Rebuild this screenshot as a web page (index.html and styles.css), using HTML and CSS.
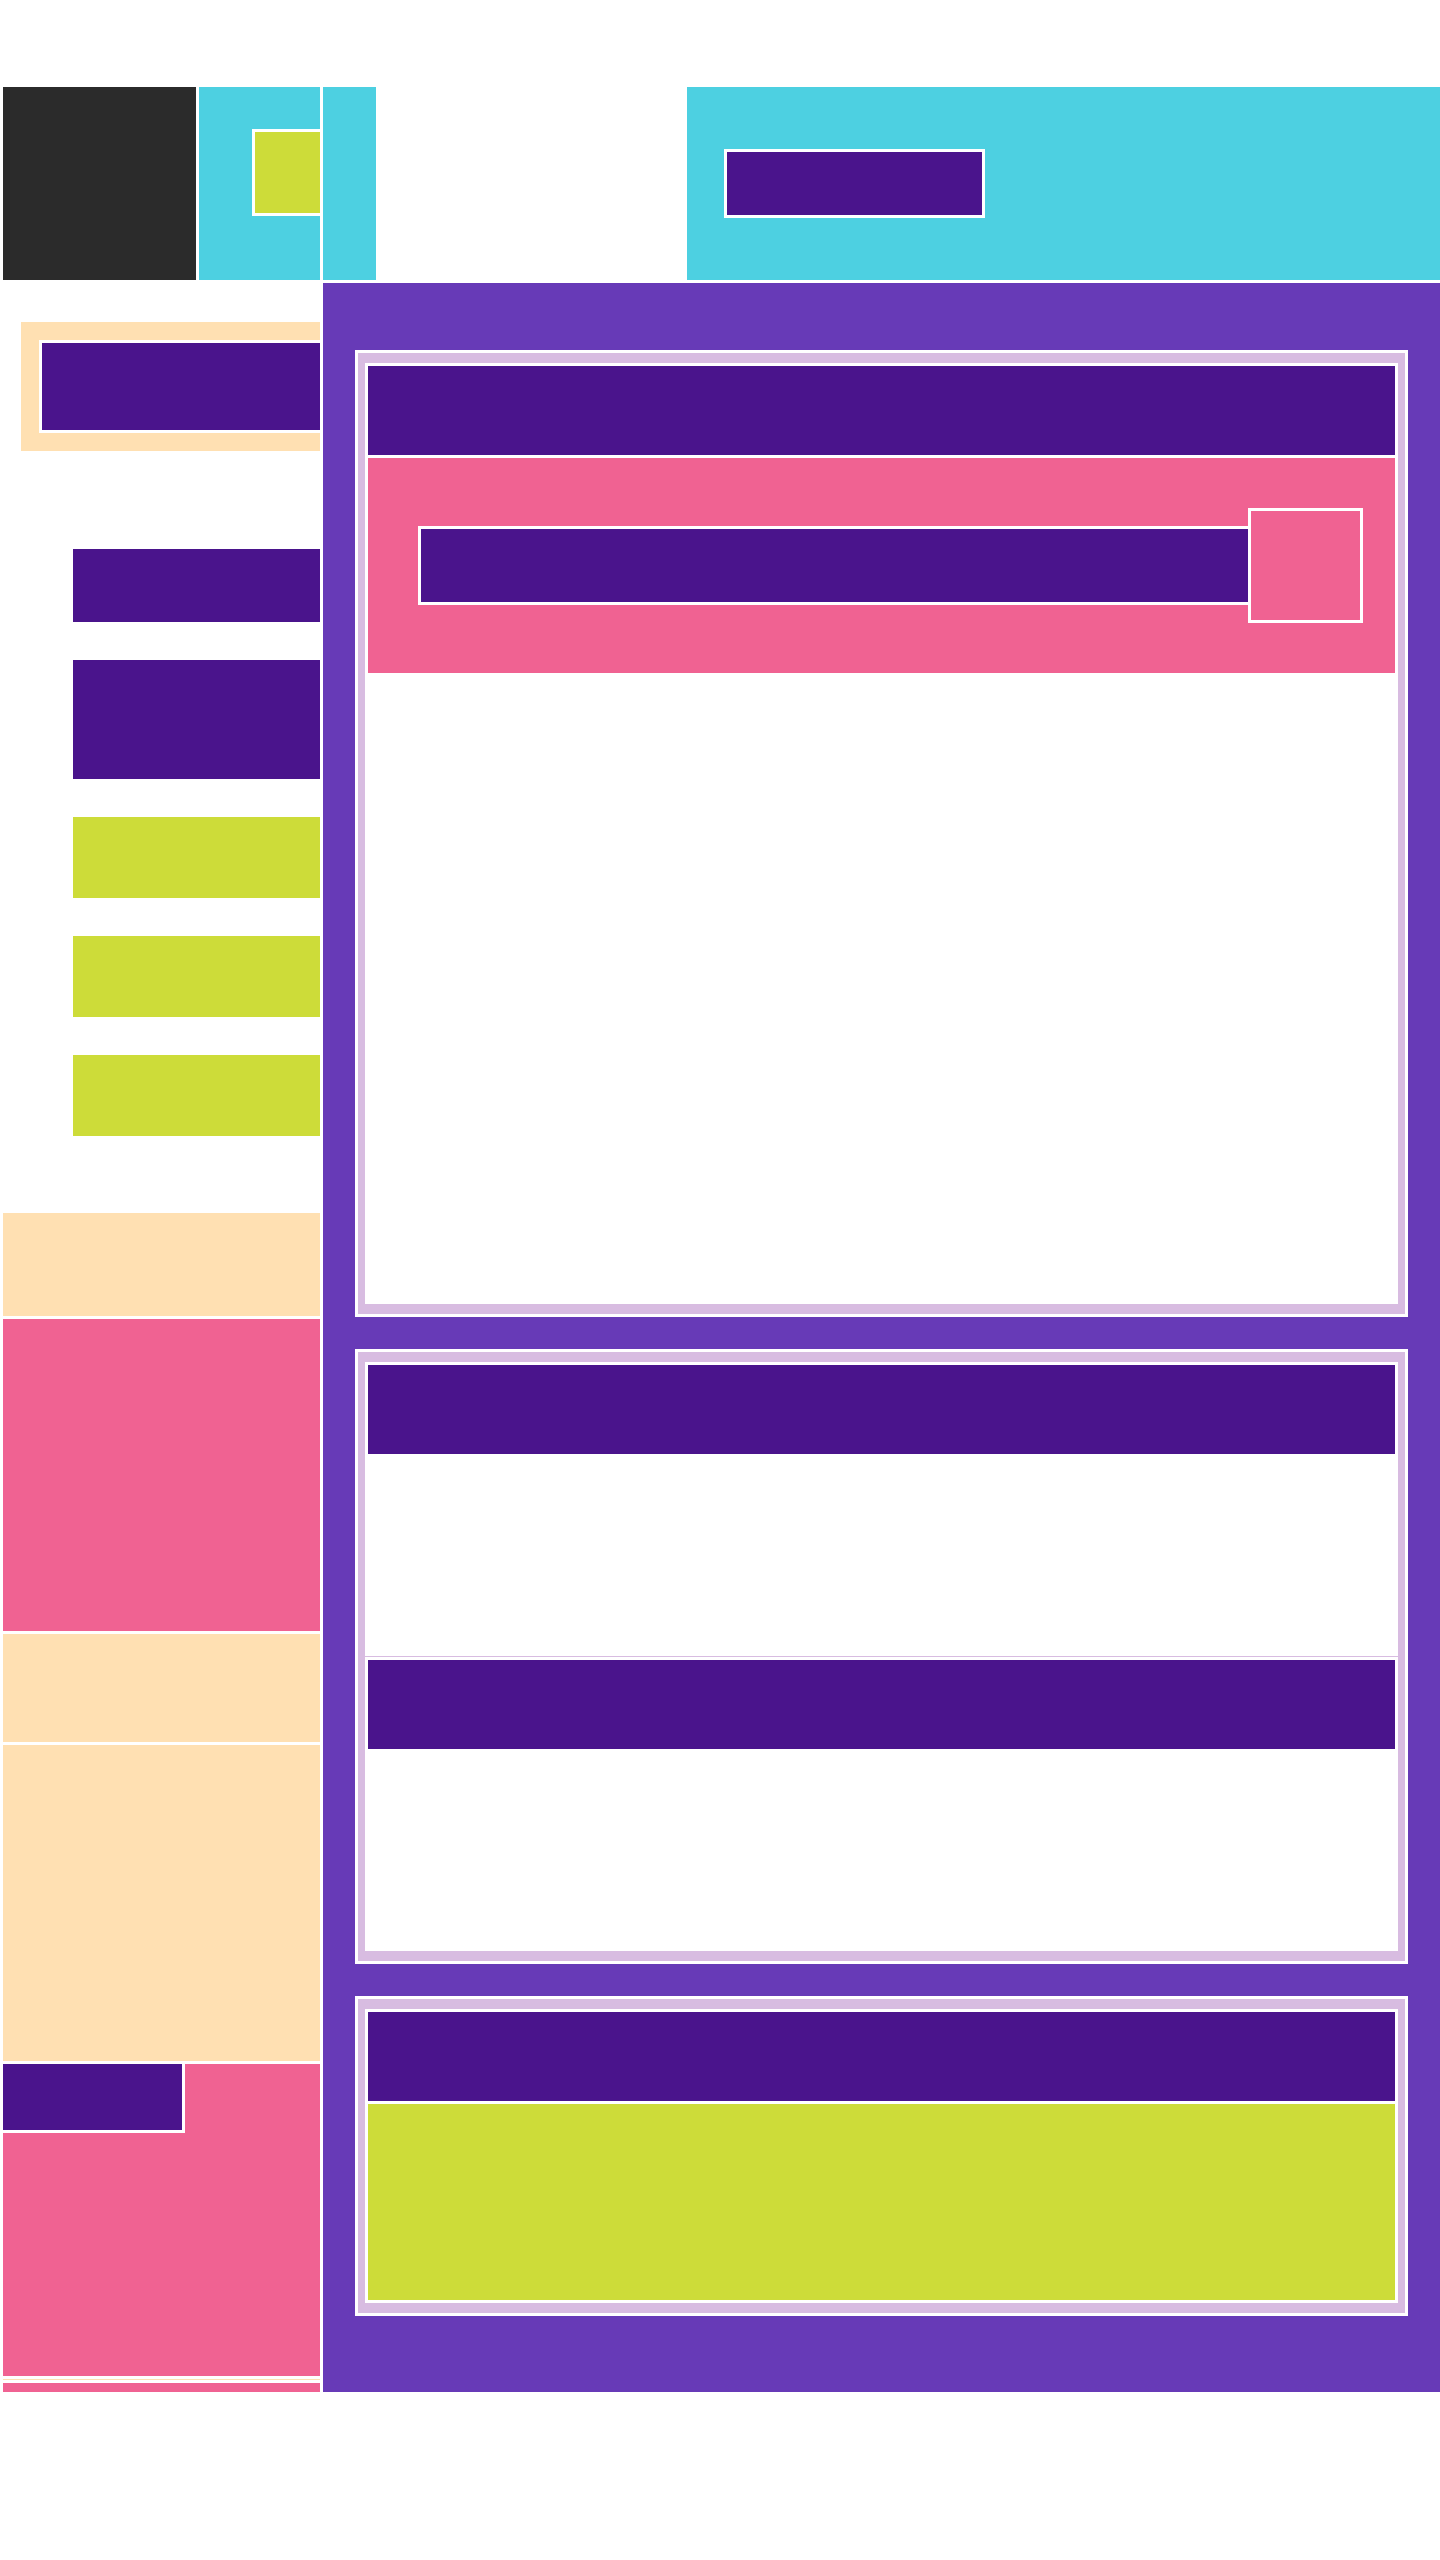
FILE: index.html
```html
<!DOCTYPE html>
<html lang="en">
<head>
    <meta charset="UTF-8">
    <meta name="viewport" content="width=device-width, initial-scale=1.0">
    <title>Dashboard</title>
    <link rel="stylesheet" href="styles.css">
</head>
<body>

    <div class="page">
        <header class="topbar">
            <div class="brand"></div>
            <div class="brand-tools">
                <span class="tool-chip"></span>
            </div>
            <div class="nav-toggle"></div>
            <div class="topbar-main">
                <span class="topbar-btn"></span>
            </div>
        </header>

        <div class="layout">
            <aside class="sidebar">
                <div class="profile">
                    <div class="profile-name"></div>
                </div>

                <nav class="menu">
                    <a class="menu-item menu-dark"></a>
                    <a class="menu-item menu-dark menu-tall"></a>
                    <a class="menu-item menu-lime"></a>
                    <a class="menu-item menu-lime"></a>
                    <a class="menu-item menu-lime"></a>
                </nav>

                <div class="side-blocks">
                    <div class="block peach block-notice"></div>
                    <div class="block pink block-feature"></div>
                    <div class="block peach block-info"></div>
                    <div class="block peach block-list"></div>
                    <div class="block pink block-feature">
                        <span class="side-btn"></span>
                    </div>
                    <div class="block peach block-rule"></div>
                    <div class="block pink block-foot"></div>
                </div>
            </aside>

            <main class="content">
                <section class="card">
                    <div class="panel">
                        <div class="panel-head"></div>
                        <div class="search-bar">
                            <div class="search-input"></div>
                            <div class="search-btn"></div>
                        </div>
                        <div class="panel-fill"></div>
                    </div>
                </section>

                <section class="card">
                    <div class="panel">
                        <div class="panel-head"></div>
                        <div class="panel-body"></div>
                    </div>
                    <div class="panel">
                        <div class="panel-head"></div>
                        <div class="panel-body"></div>
                    </div>
                </section>

                <section class="card">
                    <div class="panel">
                        <div class="panel-head"></div>
                        <div class="panel-body lime-body"></div>
                    </div>
                </section>
            </main>
        </div>
    </div>

</body>
</html>
```

FILE: styles.css
```css
body {
    font-family: "Liberation Sans", Arial, sans-serif;
    margin: 0;
    padding: 0;
    background-color: #fff;
}

.page {
    width: 1440px;
    padding: 87px 0 0 3px;
    box-sizing: border-box;
}

/* top bar */
.topbar {
    display: flex;
    gap: 3px;
    height: 193px;
}

.brand {
    width: 193px;
    background-color: #2b2b2b;
}

.brand-tools {
    width: 121px;
    background-color: #4dd0e1;
    overflow: hidden;
}

.tool-chip {
    display: block;
    width: 100px;
    height: 81px;
    margin: 42px 0 0 53px;
    border: 3px solid #fff;
    background-color: #cddc39;
}

.nav-toggle {
    width: 53px;
    background-color: #4dd0e1;
}

.topbar-main {
    width: 753px;
    margin-left: auto;
    display: flex;
    align-items: center;
    padding-left: 37px;
    box-sizing: border-box;
    background-color: #4dd0e1;
}

.topbar-btn {
    display: block;
    width: 255px;
    height: 63px;
    border: 3px solid #fff;
    background-color: #4a148c;
}

/* layout */
.layout {
    display: flex;
    gap: 3px;
    margin-top: 3px;
}

.sidebar {
    width: 317px;
    display: flex;
    flex-direction: column;
}

.profile {
    margin: 39px 0 0 18px;
    padding: 18px 0 18px 18px;
    background-color: #ffe0b2;
}

.profile-name {
    height: 87px;
    border: 3px solid #fff;
    border-right: none;
    background-color: #4a148c;
}

.menu {
    display: flex;
    flex-direction: column;
    gap: 38px;
    margin-top: 98px;
    padding-left: 70px;
}

.menu-item {
    display: block;
    height: 81px;
}

.menu-dark {
    height: 73px;
    background-color: #4a148c;
}

.menu-tall {
    height: 119px;
}

.menu-lime {
    background-color: #cddc39;
}

.side-blocks {
    display: flex;
    flex-direction: column;
    gap: 3px;
    margin-top: 77px;
}

.peach {
    background-color: #ffe0b2;
}

.pink {
    background-color: #f06292;
}

.block-notice {
    height: 103px;
}

.block-feature {
    height: 312px;
}

.block-info {
    height: 108px;
}

.block-list {
    height: 316px;
}

.block-rule {
    height: 1px;
}

.block-foot {
    height: 9px;
}

.side-btn {
    display: block;
    width: 179px;
    height: 66px;
    border-right: 3px solid #fff;
    border-bottom: 3px solid #fff;
    background-color: #4a148c;
}

/* main content */
.content {
    flex: 1;
    display: flex;
    flex-direction: column;
    gap: 32px;
    padding: 67px 32px 76px;
    background-color: #673ab7;
}

.card {
    display: flex;
    flex-direction: column;
    gap: 1px;
    padding: 10px 7px;
    border: 3px solid #fff;
    background-color: #d8bce1;
}

.panel {
    display: flex;
    flex-direction: column;
    gap: 3px;
    padding: 3px;
    background-color: #fff;
}

.panel-head {
    height: 89px;
    background-color: #4a148c;
}

.panel-body {
    height: 196px;
}

.lime-body {
    background-color: #cddc39;
}

.panel-fill {
    height: 625px;
}

.search-bar {
    display: flex;
    align-items: center;
    height: 215px;
    padding: 0 32px 0 50px;
    box-sizing: border-box;
    background-color: #f06292;
}

.search-input {
    flex: 1;
    height: 73px;
    border: 3px solid #fff;
    border-right: none;
    background-color: #4a148c;
}

.search-btn {
    width: 109px;
    height: 109px;
    border: 3px solid #fff;
    background-color: #f06292;
}
```
